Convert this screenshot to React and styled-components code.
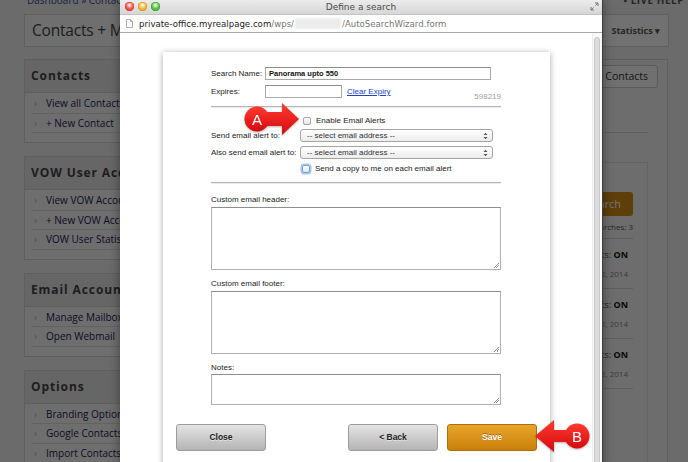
import styled, { createGlobalStyle } from "styled-components";

const GlobalStyle = createGlobalStyle`
  html, body { margin: 0; padding: 0; }
  body {
    width: 688px;
    height: 462px;
    overflow: hidden;
    font-family: "Liberation Sans", Arial, sans-serif;
  }
`;

const Page = styled.div`
  position: relative;
  width: 688px;
  height: 462px;
  overflow: hidden;
  background: #eeeeee;
  font-family: "Open Sans", sans-serif;
`;

const TopBar = styled.div`
  display: flex;
  justify-content: space-between;
  height: 12px;
  margin-top: -6px;
  padding: 0 4px 0 27px;
  font-size: 10px;
  line-height: 12px;
`;

const Crumb = styled.span`
  color: #3b4a8c;
`;

const LiveHelp = styled.span`
  color: #555;
  font-weight: 700;
  letter-spacing: 0.5px;
`;

const HeaderBox = styled.div`
  display: flex;
  align-items: stretch;
  height: 31px;
  margin: 8px 19px 0 24px;
  border: 1px solid #d4d4d4;
  background: #f6f6f6;
`;

const Title = styled.h1`
  flex: 1;
  margin: 0;
  padding-left: 7px;
  font-size: 15.5px;
  font-weight: 500;
  letter-spacing: -0.2px;
  line-height: 31px;
  color: #444;
  white-space: nowrap;
`;

const Tab = styled.div`
  display: flex;
  align-items: center;
  padding: 0 8px;
  border-left: 1px solid #d4d4d4;
  font-size: 9px;
  font-weight: 700;
  color: #555;
  background: #fbfbfb;
`;

const Body = styled.div`
  display: flex;
  gap: 10px;
  margin: 12px 20px 0 24px;
`;

const Sidebar = styled.div`
  width: 200px;
  flex-shrink: 0;
`;

const Panel = styled.div`
  border: 1px solid #d2d2d2;
  background: #f3f3f3;
  margin-bottom: 13px;
`;

const PanelHeader = styled.div`
  height: 32px;
  padding-left: 6px;
  background: #e3e3e3;
  border-bottom: 1px solid #d2d2d2;
  font-size: 12px;
  font-weight: 700;
  letter-spacing: 0.9px;
  line-height: 32px;
  color: #444;
  white-space: nowrap;
`;

const NavList = styled.ul`
  list-style: none;
  margin: 0;
  padding: 1px 8px 9px 7px;
`;

const NavItem = styled.li`
  display: flex;
  align-items: center;
  height: 18.5px;
  border-bottom: 1px solid #dadada;
  font-size: 10px;
  color: #1f2152;
  white-space: nowrap;
  &::before {
    content: "›";
    width: 12px;
    padding-left: 2px;
    color: #b5b5b5;
  }
`;

const Content = styled.div`
  flex: 1;
  border: 1px solid #d2d2d2;
  background: #f1f1f1;
  height: 420px;
`;

const Toolbar = styled.div`
  display: flex;
  justify-content: flex-end;
  padding: 5px 9px 0 0;
`;

const GreyButton = styled.div`
  height: 21px;
  padding: 0 9px;
  border: 1px solid #c8c8c8;
  border-radius: 3px;
  background: #f8f8f8;
  font-size: 10.5px;
  line-height: 21px;
  color: #333;
`;

const Filters = styled.div`
  height: 44px;
  margin-right: 19px;
  border-bottom: 1px solid #d6d6d6;
`;

const SearchCard = styled.div`
  width: 140px;
  margin: 29px 19px 0 auto;
  padding: 29px 14px 0 0;
  border: 1px solid #dcdcdc;
  border-bottom: none;
  height: 300px;
  text-align: right;
`;

const OrangeButton = styled.div`
  height: 24px;
  border-radius: 3px;
  background: #d08a16;
  color: #fff;
  font-size: 11px;
  line-height: 24px;
  padding-right: 12px;
`;

const SmallNote = styled.div`
  margin-top: 5px;
  padding-bottom: 6px;
  border-bottom: 1px solid #cfcfcf;
  font-size: 8px;
  color: #555;
`;

const AlertItem = styled.div`
  height: 50px;
  border-bottom: 1px solid #cfcfcf;
  padding: 9px 5px 0 0;
  box-sizing: border-box;
`;

const AlertState = styled.div`
  font-size: 9px;
  color: #444;
  b { color: #111; }
`;

const AlertDate = styled.div`
  margin-top: 7px;
  font-size: 8px;
  color: #888;
`;

const Dim = styled.div`
  position: absolute;
  inset: 0;
  background: rgba(0, 0, 0, 0.55);
`;

/* the popup window */
const Window = styled.div`
  position: absolute;
  left: 120px;
  top: 0;
  width: 482px;
  height: 470px;
  display: flex;
  flex-direction: column;
  background: #fff;
  border-right: 1px solid #3c3c3c;
  box-shadow: 0 0 10px rgba(0, 0, 0, 0.4);
`;

const TitleBar = styled.div`
  position: relative;
  display: flex;
  align-items: center;
  justify-content: center;
  height: 14px;
  background: linear-gradient(#ececec, #d6d6d6);
  font-family: "DejaVu Sans", sans-serif;
  font-size: 9px;
  color: #4a4a4a;
`;

const Lights = styled.div`
  position: absolute;
  left: 5px;
  top: 2px;
  display: flex;
  gap: 4px;
`;

const Light = styled.span`
  width: 9px;
  height: 9px;
  border-radius: 50%;
  background: radial-gradient(circle at 50% 35%, #fff 0, ${(p) => p.$c} 45%, ${(p) => p.$d} 100%);
  box-shadow: inset 0 0 0 0.5px ${(p) => p.$d};
`;

const Resize = styled.svg`
  position: absolute;
  right: 3px;
  top: 2px;
`;

const UrlBar = styled.div`
  display: flex;
  align-items: center;
  height: 17px;
  padding-left: 6px;
  border-top: 1px solid #c4c4c4;
  border-bottom: 1px solid #a9a9a9;
  background: #fff;
  font-family: "DejaVu Sans", sans-serif;
  font-size: 8.6px;
  color: #777;
  white-space: nowrap;
`;

const Host = styled.span`
  color: #222;
  margin-left: 6px;
`;

const Blurred = styled.span`
  display: inline-block;
  width: 46px;
  height: 11px;
  margin: 0 1px;
  background: #ececec;
  filter: blur(1px);
`;

const WindowBody = styled.div`
  flex: 1;
  display: flex;
  min-height: 0;
`;

const Scroller = styled.div`
  flex: 1;
  padding: 19px 0 0 43px;
  overflow: hidden;
`;

const ScrollTrack = styled.div`
  width: 10px;
  padding: 4px 2px 0 1px;
  box-sizing: border-box;
  border-left: 1px solid #eee;
  background: #fafafa;
`;

const ScrollThumb = styled.div`
  height: 100%;
  border-radius: 4px;
  border: 1px solid #c8c8c8;
  background: #dcdcdc;
`;

const Card = styled.div`
  width: 387px;
  box-sizing: border-box;
  padding: 15px 49px 30px 48px;
  background: #fff;
  box-shadow: 0 1px 6px rgba(0, 0, 0, 0.35);
  font-family: "Liberation Sans", Arial, sans-serif;
  font-size: 8px;
  color: #222;
`;

const Row = styled.div`
  display: flex;
  align-items: center;
  height: 13px;
  margin-top: ${(p) => p.$mt || 0}px;
  padding-left: ${(p) => p.$pl || 0}px;
`;

const Label = styled.span`
  width: ${(p) => p.$w}px;
  flex-shrink: 0;
  white-space: nowrap;
`;

const TextInput = styled.div`
  width: ${(p) => p.$w}px;
  height: 13px;
  box-sizing: border-box;
  padding-left: 3px;
  border: 1px solid #a8a8a8;
  border-top-color: #8c8c8c;
  font-size: 7.5px;
  font-weight: 700;
  line-height: 11px;
  color: #111;
`;

const LinkText = styled.a`
  margin-left: 5px;
  color: #2443c4;
  text-decoration: underline;
`;

const Code = styled.span`
  margin-left: auto;
  align-self: flex-end;
  margin-bottom: -3px;
  font-size: 8px;
  color: #a0a0a0;
`;

const Rule = styled.div`
  height: 0;
  margin-top: ${(p) => p.$mt}px;
  border-top: 1px solid #b4b4b4;
  border-bottom: 1px solid #ececec;
`;

const Check = styled.span`
  width: 8px;
  height: 8px;
  box-sizing: border-box;
  border-radius: 2px;
  border: 1px solid ${(p) => (p.$focus ? "#6d9fd8" : "#a5a5a5")};
  background: linear-gradient(#fff, #e4e4e4);
  box-shadow: ${(p) => (p.$focus ? "0 0 0 1.5px #a9c8ee" : "none")};
  margin-right: 5px;
`;

const Select = styled.div`
  display: flex;
  align-items: center;
  justify-content: space-between;
  width: 193px;
  height: 13px;
  box-sizing: border-box;
  padding: 0 4px 0 6px;
  border: 1px solid #a4a4a4;
  border-radius: 3px;
  background: linear-gradient(#ffffff, #ececec);
  font-size: 8px;
  color: #333;
`;

const FieldLabel = styled.div`
  margin-top: ${(p) => p.$mt}px;
  line-height: 8px;
`;

const TextArea = styled.div`
  position: relative;
  height: ${(p) => p.$h}px;
  margin-top: ${(p) => p.$mt || 3}px;
  box-sizing: border-box;
  border: 1px solid #b0b0b0;
  border-top-color: #8e8e8e;
  &::after {
    content: "";
    position: absolute;
    right: 1px;
    bottom: 1px;
    width: 5px;
    height: 5px;
    background: linear-gradient(135deg, transparent 45%, #999 45%, #999 55%, transparent 55%, transparent 70%, #999 70%, #999 80%, transparent 80%);
  }
`;

const ButtonRow = styled.div`
  display: flex;
  gap: 9px;
  margin: 19px -36px 0 -35px;
`;

const Btn = styled.div`
  width: 90px;
  height: 27px;
  box-sizing: border-box;
  margin-right: ${(p) => (p.$push ? "auto" : "0")};
  border: 1px solid ${(p) => (p.$primary ? "#b06e08" : "#9c9c9c")};
  border-radius: 3px;
  background: ${(p) =>
    p.$primary
      ? "linear-gradient(#e9a62a, #c97f0c)"
      : "linear-gradient(#e4e4e4, #b4b4b4)"};
  color: ${(p) => (p.$primary ? "#fff" : "#222")};
  text-shadow: ${(p) => (p.$primary ? "0 -1px 0 rgba(0,0,0,0.35)" : "0 1px 0 rgba(255,255,255,0.5)")};
  font-size: 8.5px;
  font-weight: 700;
  line-height: 25px;
  text-align: center;
`;

const Callout = styled.svg`
  position: absolute;
  left: ${(p) => p.$x}px;
  top: ${(p) => p.$y}px;
  filter: drop-shadow(0 1px 1px rgba(0, 0, 0, 0.3));
`;

function Updown() {
  return (
    <svg width="5" height="8" viewBox="0 0 5 8">
      <path d="M0.5 3 L2.5 0.8 L4.5 3 Z M0.5 5 L2.5 7.2 L4.5 5 Z" fill="#555" />
    </svg>
  );
}

function Marker({ x, y, letter, flip }) {
  const arrow = flip
    ? "M3 18 L22 2 L22 12 L46 12 L46 24 L22 24 L22 34 Z"
    : "M59 18 L42 2 L42 11 L16 11 L16 25 L42 25 L42 34 Z";
  const cx = flip ? 45 : 17;
  return (
    <Callout $x={x} $y={y} width="62" height="37" viewBox="0 0 62 37">
      <defs>
        <linearGradient id={"g" + letter} x1="0" y1="0" x2="0" y2="1">
          <stop offset="0" stopColor="#ff3b2f" />
          <stop offset="1" stopColor="#d40b0f" />
        </linearGradient>
      </defs>
      <path d={arrow} fill={"url(#g" + letter + ")"} />
      <circle cx={cx} cy="18" r="12.5" fill={"url(#g" + letter + ")"} />
      <text
        x={cx}
        y="23.5"
        textAnchor="middle"
        fill="#fff"
        fontSize="15"
        fontFamily="Liberation Sans, Arial, sans-serif"
      >
        {letter}
      </text>
    </Callout>
  );
}

export default function App() {
  return (
    <Page>
      <GlobalStyle />
      <TopBar>
        <Crumb>Dashboard » Contacts + Mailing Lists</Crumb>
        <LiveHelp>▪ LIVE HELP</LiveHelp>
      </TopBar>
      <HeaderBox>
        <Title>Contacts + Mailing Lists</Title>
        <Tab>Statistics&nbsp;▾</Tab>
      </HeaderBox>
      <Body>
        <Sidebar>
          <Panel>
            <PanelHeader>Contacts</PanelHeader>
            <NavList>
              <NavItem>View all Contacts</NavItem>
              <NavItem>+ New Contact</NavItem>
            </NavList>
          </Panel>
          <Panel>
            <PanelHeader>VOW User Accounts</PanelHeader>
            <NavList>
              <NavItem>View VOW Accounts</NavItem>
              <NavItem>+ New VOW Account</NavItem>
              <NavItem>VOW User Statistics</NavItem>
            </NavList>
          </Panel>
          <Panel>
            <PanelHeader>Email Accounts</PanelHeader>
            <NavList>
              <NavItem>Manage Mailboxes</NavItem>
              <NavItem>Open Webmail</NavItem>
            </NavList>
          </Panel>
          <Panel>
            <PanelHeader>Options</PanelHeader>
            <NavList>
              <NavItem>Branding Options</NavItem>
              <NavItem>Google Contacts Sync</NavItem>
              <NavItem>Import Contacts</NavItem>
            </NavList>
          </Panel>
        </Sidebar>
        <Content>
          <Toolbar>
            <GreyButton>Import Contacts</GreyButton>
          </Toolbar>
          <Filters />
          <SearchCard>
            <OrangeButton>New Search</OrangeButton>
            <SmallNote>Saved Searches: 3</SmallNote>
            {[0, 1, 2].map((i) => (
              <AlertItem key={i}>
                <AlertState>
                  Email Alerts: <b>ON</b>
                </AlertState>
                <AlertDate>Jan 2, 2014</AlertDate>
              </AlertItem>
            ))}
          </SearchCard>
        </Content>
      </Body>

      <Dim />

      <Window>
        <TitleBar>
          <Lights>
            <Light $c="#fc5b52" $d="#c9312a" />
            <Light $c="#fdbb3a" $d="#c98c16" />
            <Light $c="#5fc84c" $d="#2f9a26" />
          </Lights>
          Define a search
          <Resize width="9" height="9" viewBox="0 0 9 9">
            <path d="M5 1 H8 V4 M8 1 L5.5 3.5 M4 8 H1 V5 M1 8 L3.5 5.5" stroke="#777" strokeWidth="1" fill="none" />
          </Resize>
        </TitleBar>
        <UrlBar>
          <svg width="7" height="9" viewBox="0 0 7 9">
            <path d="M0.5 0.5 H4.5 L6.5 2.5 V8.5 H0.5 Z M4.5 0.5 V2.5 H6.5" fill="#fff" stroke="#999" strokeWidth="0.8" />
          </svg>
          <Host>private-office.myrealpage.com</Host>/wps/
          <Blurred />
          /AutoSearchWizard.form
        </UrlBar>
        <WindowBody>
          <Scroller>
            <Card>
              <Row>
                <Label $w={54}>Search Name:</Label>
                <TextInput $w={226}>Panorama upto 550</TextInput>
              </Row>
              <Row $mt={5}>
                <Label $w={54}>Expires:</Label>
                <TextInput $w={77} />
                <LinkText>Clear Expiry</LinkText>
                <Code>598219</Code>
              </Row>
              <Rule $mt={8} />
              <Row $mt={6} $pl={92}>
                <Check />
                Enable Email Alerts
              </Row>
              <Row $mt={2}>
                <Label $w={89}>Send email alert to:</Label>
                <Select>
                  -- select email address --
                  <Updown />
                </Select>
              </Row>
              <Row $mt={4}>
                <Label $w={89}>Also send email alert to:</Label>
                <Select>
                  -- select email address --
                  <Updown />
                </Select>
              </Row>
              <Row $mt={3} $pl={91}>
                <Check $focus />
                Send a copy to me on each email alert
              </Row>
              <Rule $mt={7} />
              <FieldLabel $mt={12}>Custom email header:</FieldLabel>
              <TextArea $h={63} />
              <FieldLabel $mt={10}>Custom email footer:</FieldLabel>
              <TextArea $h={63} />
              <FieldLabel $mt={10}>Notes:</FieldLabel>
              <TextArea $h={31} $mt={2} />
              <ButtonRow>
                <Btn $push>Close</Btn>
                <Btn>&lt; Back</Btn>
                <Btn $primary>Save</Btn>
              </ButtonRow>
            </Card>
          </Scroller>
          <ScrollTrack>
            <ScrollThumb />
          </ScrollTrack>
        </WindowBody>
      </Window>

      <Marker x={240} y={101} letter="A" />
      <Marker x={532} y={418} letter="B" flip />
    </Page>
  );
}
